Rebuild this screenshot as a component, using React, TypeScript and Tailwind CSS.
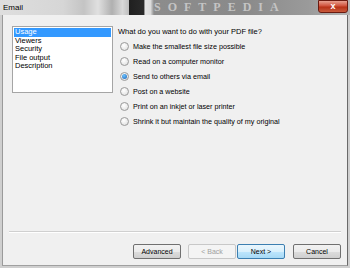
import React from "react";

const sections = ["Usage", "Viewers", "Security", "File output", "Description"];

const options = [
  "Make the smallest file size possible",
  "Read on a computer monitor",
  "Send to others via email",
  "Post on a website",
  "Print on an inkjet or laser printer",
  "Shrink it but maintain the quality of my original",
];

const Radio: React.FC<{ checked?: boolean }> = ({ checked }) => (
  <span className="w-[9px] h-[9px] rounded-full border border-[#9a9a9a] bg-[radial-gradient(circle_at_40%_35%,#ffffff,#dcdcdc)] flex items-center justify-center shrink-0">
    {checked && <span className="w-[5px] h-[5px] rounded-full bg-[radial-gradient(circle_at_40%_35%,#6cc4ff,#1a5fb4)]" />}
  </span>
);

const Button: React.FC<{ label: string; disabled?: boolean; focused?: boolean }> = ({ label, disabled, focused }) => (
  <button
    className={`w-[48px] h-[15px] rounded-[2px] border text-[7px] leading-none flex items-center justify-center ${
      disabled
        ? "border-[#c8c8c8] bg-[#f4f4f4] text-[#a0a0a0]"
        : focused
        ? "border-[#3c7fb1] bg-[linear-gradient(#eaf6fd,#d9f0fc_50%,#bee6fd_50%,#a7d9f5)] text-black"
        : "border-[#707070] bg-[linear-gradient(#f2f2f2,#ebebeb_50%,#dddddd_50%,#cfcfcf)] text-black"
    }`}
  >
    {label}
  </button>
);

export default function App() {
  return (
    <div className="w-[350px] h-[268px] overflow-hidden bg-[#cfcfcf] font-['Liberation_Sans',Arial,sans-serif] flex flex-col">
      {/* title bar (blurred desktop behind glass) */}
      <div className="relative h-[15px] shrink-0 overflow-hidden bg-[linear-gradient(90deg,#dedede_0%,#d6d6d6_18%,#c4c4c4_24%,#e0e0e0_28%,#b0b0b0_32%,#d8d8d8_35%,#bcbcbc_37%,#202020_37%,#2a2a2a_41%,#e4e4e4_41.5%,#dcdcdc_43%,#8c8c8c_44%,#8a8a8a_70%,#9a9a9a_88%,#b4b4b4_100%)]">
        <span className="absolute left-[3px] top-[2px] text-[8px] text-black">Email</span>
        <span className="absolute left-[154px] top-0 h-[15px] text-[12px] leading-[15px] tracking-[7px] text-[#c4c4c4] font-['Liberation_Serif',serif] font-bold">
          SOFTPEDIA
        </span>
        <span className="absolute right-[2px] top-0 w-[30px] h-[13px] rounded-b-[3px] border border-[#6a1a10] bg-[linear-gradient(#e8a090,#d0523c_45%,#b83218_55%,#c85a3c)] flex items-center justify-center text-white text-[9px] font-bold leading-none">
          x
        </span>
      </div>

      {/* dialog body */}
      <div className="mx-[2px] mb-[2px] flex-1 bg-[#f0f0f0] border-l border-[#9a9a9a] border-r border-r-[#6a6a6a] border-b border-b-[#a0a0a0] flex flex-col">
        <div className="flex pt-[11px] pl-[9px]">
          <ul className="w-[101px] h-[67px] bg-white border border-[#a5a5a5] p-[1px] text-[7.5px] leading-[8.5px]">
            {sections.map((s, i) => (
              <li key={s} className={`pl-[1px] ${i === 0 ? "bg-[#3399ff] text-white" : "text-black"}`}>
                {s}
              </li>
            ))}
          </ul>
          <div className="ml-[5px] pt-[1px] text-[7.5px] text-black">
            <div className="leading-[9px]">What do you want to do with your PDF file?</div>
            <div className="mt-[6px] flex flex-col gap-[6px] pl-[2px] text-[7.2px]">
              {options.map((o, i) => (
                <label key={o} className="flex items-center gap-[4px] h-[9px] leading-none">
                  <Radio checked={i === 2} />
                  <span>{o}</span>
                </label>
              ))}
            </div>
          </div>
        </div>

        <div className="mt-auto mx-[6px] border-t border-[#d0d0d0] border-b border-b-white" />
        <div className="flex justify-end items-center gap-[6px] pr-[6px] pt-[11px] pb-[6px]">
          <div className="mr-[1px]">
            <Button label="Advanced" />
          </div>
          <div className="flex gap-[1px]">
            <Button label="< Back" disabled />
            <Button label="Next >" focused />
          </div>
          <div className="ml-[2px]">
            <Button label="Cancel" />
          </div>
        </div>
      </div>
    </div>
  );
}
